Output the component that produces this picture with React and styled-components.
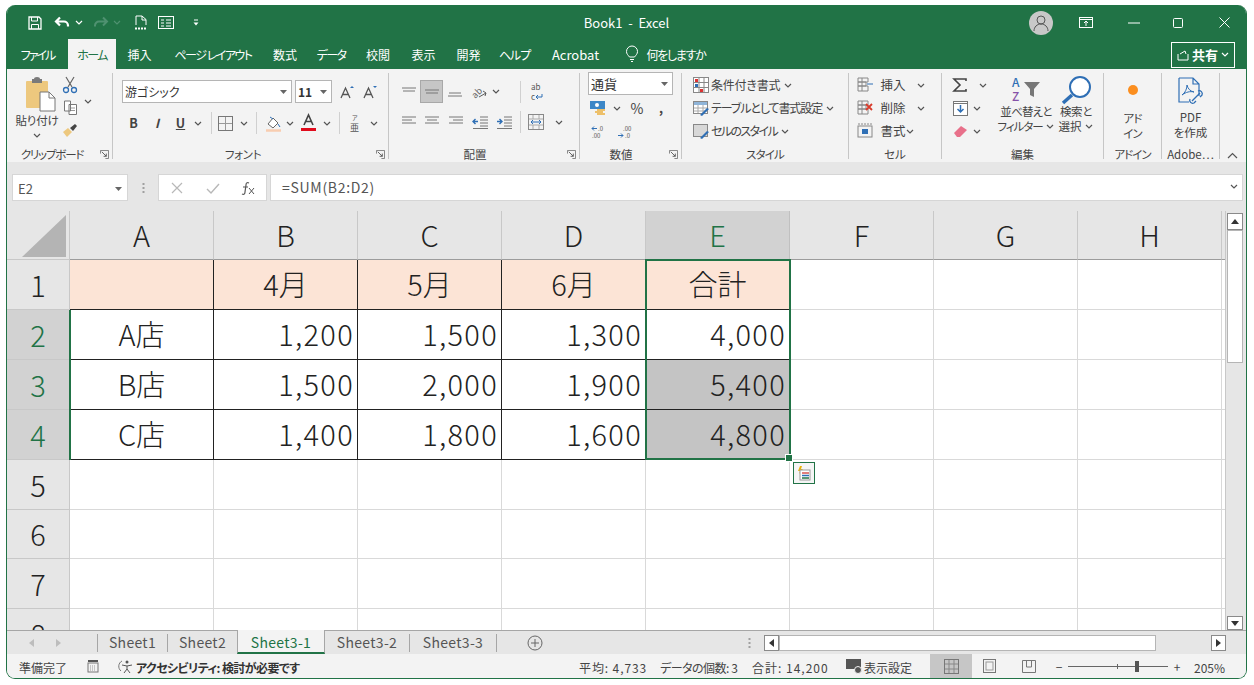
import React from 'react'
import styled, { createGlobalStyle } from 'styled-components'

const Global = createGlobalStyle`
  html, body { margin: 0; padding: 0; background: #fff; overflow: hidden; }
  body { font-family: "Noto Sans CJK JP", "Noto Sans", sans-serif; font-feature-settings: "palt"; }
  * { box-sizing: border-box; }
`

const GREEN = '#217346'

const Page = styled.div`
  width: 1254px;
  height: 685px;
  padding: 5px 7px 6px 6px;
`
const Win = styled.div`
  width: 100%;
  height: 100%;
  border: 1px solid ${GREEN};
  border-top: 0;
  border-radius: 9px;
  overflow: hidden;
  display: flex;
  flex-direction: column;
  background: #f3f3f3;
`

/* title bar */
const TitleBar = styled.div`
  height: 35px;
  padding-top: 1px;
  background: ${GREEN};
  position: relative;
  display: flex;
  align-items: center;
`
const Title = styled.div`
  position: absolute;
  left: 0;
  right: 0;
  top: 9px;
  text-align: center;
  color: #fff;
  font-size: 13px;
  line-height: 18px;
  white-space: pre;
`
const Slot = styled.span`
  flex: none;
  width: ${p => p.$w}px;
  margin-left: ${p => p.$ml || 0}px;
  display: inline-flex;
  align-items: center;
  justify-content: center;
`
const Avatar = styled.span`
  width: 24px;
  height: 24px;
  border-radius: 50%;
  background: #c8c8c8;
  display: flex;
  align-items: center;
  justify-content: center;
`

/* ribbon tabs */
const TabRow = styled.div`
  height: 30px;
  background: ${GREEN};
  display: flex;
  align-items: center;
`
const RTab = styled.div`
  flex: none;
  width: ${p => p.$w}px;
  margin-left: ${p => p.$ml || 0}px;
  height: 30px;
  text-align: center;
  font-size: ${p => p.$fs || 12}px;
  letter-spacing: ${p => p.$ls || 0}px;
  line-height: 31px;
  white-space: nowrap;
  color: ${p => (p.$on ? '#217346' : '#fff')};
  background: ${p => (p.$on ? '#f3f3f3' : 'transparent')};
`
const Share = styled.div`
  width: 64px;
  height: 26px;
  margin: 1px 11px 0 auto;
  border: 1px solid #fff;
  color: #fff;
  font-size: 13px;
  font-weight: 700;
  display: flex;
  align-items: center;
  justify-content: center;
  gap: 3px;
`

/* ribbon */
const Ribbon = styled.div`
  height: 93px;
  padding: 4px 0 3px;
  background: #f3f3f3;
  display: flex;
  position: relative;
`
const Group = styled.div`
  flex: none;
  width: ${p => p.$w}px;
  height: 86px;
  border-right: 1px solid #c6c6c6;
  display: flex;
  flex-direction: column;
  position: relative;
`
const Body = styled.div`
  flex: none;
  height: 75px;
  padding-top: 1px;
  padding-left: ${p => p.$pl || 0}px;
  display: flex;
  flex-direction: ${p => (p.$row ? 'row' : 'column')};
`
const GLabel = styled.div`
  height: 13px;
  width: ${p => (p.$w ? `${p.$w}px` : 'auto')};
  text-align: center;
  font-size: 11.5px;
  letter-spacing: ${p => p.$ls || 0}px;
  line-height: 13px;
  color: #444;
  white-space: nowrap;
`
const Launcher = styled.svg`
  position: absolute;
  right: 3px;
  bottom: 0;
  width: 9px;
  height: 9px;
`
const Row = styled.div`
  display: flex;
  align-items: center;
  height: ${p => p.$h}px;
  margin-top: ${p => p.$mt || 0}px;
  font-size: 12.5px;
  line-height: 16px;
  color: #444;
  white-space: nowrap;
`
const Txt = styled.span`
  font-size: ${p => p.$fs || 12}px;
  letter-spacing: ${p => p.$ls || 0}px;
`
const Column = styled.div`
  flex: none;
  width: ${p => p.$w}px;
  margin-left: ${p => p.$ml || 0}px;
  padding-top: ${p => p.$pt || 0}px;
  display: flex;
  flex-direction: column;
  align-items: center;
`
const Combo = styled.div`
  flex: none;
  width: ${p => p.$w}px;
  height: 23px;
  margin-left: ${p => p.$ml || 0}px;
  background: #fff;
  border: 1px solid #b5b5b5;
  display: flex;
  align-items: center;
  justify-content: space-between;
  padding: 0 4px 0 2px;
  font-size: 12px;
  color: #333;
`
const VSep = styled.span`
  flex: none;
  width: 1px;
  height: 22px;
  background: #d0d0d0;
  margin-left: ${p => p.$ml || 0}px;
  margin-right: ${p => p.$mr || 0}px;
`
const BigText = styled.div`
  font-size: 11.5px;
  letter-spacing: ${p => p.$ls || 0}px;
  line-height: 15px;
  color: #444;
  text-align: center;
  white-space: nowrap;
`
const Active = styled.span`
  flex: none;
  width: 23px;
  height: 23px;
  background: #c6c6c6;
  border: 1px solid #a8a8a8;
  display: inline-flex;
  align-items: center;
  justify-content: center;
`
const Collapse = styled.svg`
  position: absolute;
  right: 8px;
  bottom: 3px;
  width: 11px;
  height: 7px;
`

/* formula bar */
const FormulaBar = styled.div`
  height: 49px;
  background: #e6e6e6;
  padding: 12px 3px 10px 5px;
  display: flex;
`
const NameBox = styled.div`
  width: 116px;
  background: #fff;
  border: 1px solid #d6d6d6;
  display: flex;
  align-items: center;
  justify-content: space-between;
  padding: 2px 5px 0 5px;
  font-size: 13px;
  color: #555;
`
const Dots = styled.div`
  width: 30px;
  display: flex;
  align-items: center;
  justify-content: center;
`
const FxBox = styled.div`
  width: 109px;
  background: #fff;
  border: 1px solid #d6d6d6;
  display: flex;
  align-items: center;
`
const FInput = styled.div`
  flex: 1;
  margin-left: 3px;
  background: #fff;
  border: 1px solid #d6d6d6;
  display: flex;
  align-items: center;
  justify-content: space-between;
  padding: 0 4px 2px 11px;
  font-size: 14px;
  letter-spacing: 0.7px;
  color: #555;
`

/* sheet */
const SheetArea = styled.div`
  height: 419px;
  display: flex;
  background: #fff;
`
const Sheet = styled.div`
  width: 1220px;
  height: 419px;
  overflow: hidden;
  position: relative;
  display: grid;
  grid-template-columns: 63px repeat(8, 144px) 5px;
  grid-template-rows: 49px 50px 50px 50px 50px 50px 49px 50px 50px;
`
const Head = styled.div`
  background: ${p => (p.$sel ? '#d2d2d2' : '#e6e6e6')};
  color: ${p => (p.$sel ? GREEN : '#222')};
  border-right: 1px solid ${p => (p.$sel ? '#c0c0c0' : '#c8c8c8')};
  border-bottom: 1px solid ${p => (p.$dark ? '#9c9c9c' : '#c8c8c8')};
  font-size: 29px;
  font-weight: 300;
  display: flex;
  align-items: center;
  justify-content: center;
  padding-bottom: 2px;
  overflow: hidden;
`
const Corner = styled(Head)`
  align-items: flex-end;
  justify-content: flex-end;
  padding: 0 2px 2px 0;
`
const Cell = styled.div`
  background: ${p => p.$bg || '#fff'};
  border-right: 1px solid ${p => (p.$dr ? '#222' : '#d9d9d9')};
  border-bottom: 1px solid ${p => (p.$db ? '#222' : '#d9d9d9')};
  color: #222;
  font-size: 29px;
  font-weight: 300;
  letter-spacing: ${p => (p.$right ? 1.3 : 0)}px;
  display: flex;
  align-items: center;
  justify-content: ${p => (p.$right ? 'flex-end' : 'center')};
  padding: 0 ${p => (p.$right ? 3 : 0)}px 3px 0;
`
const Selection = styled.div`
  position: absolute;
  left: 638px;
  top: 48px;
  width: 146px;
  height: 201px;
  border: 2px solid ${GREEN};
  pointer-events: none;
`
const Handle = styled.span`
  position: absolute;
  right: -4px;
  bottom: -4px;
  width: 6px;
  height: 6px;
  background: ${GREEN};
  border: 1px solid #fff;
  box-sizing: content-box;
`
const Quick = styled.div`
  position: absolute;
  left: 786px;
  top: 251px;
  width: 22px;
  height: 22px;
  background: #f5f5f5;
  border: 1px solid ${GREEN};
  display: flex;
  align-items: center;
  justify-content: center;
`
const RowSelBar = styled.div`
  position: absolute;
  left: 62px;
  top: 99px;
  width: 2px;
  height: 150px;
  background: ${GREEN};
`
const VScroll = styled.div`
  flex: 1;
  background: #e6e6e6;
  border-left: 1px solid #c8c8c8;
  padding: 2px 3px 0 1px;
  display: flex;
  flex-direction: column;
`
const SBtn = styled.div`
  flex: none;
  height: ${p => p.$h || 16}px;
  width: ${p => p.$w || 16}px;
  margin-left: ${p => p.$ml || 0}px;
  background: #fff;
  border: 1px solid #8a8a8a;
  display: flex;
  align-items: center;
  justify-content: center;
`
const VThumb = styled.div`
  height: 133px;
  background: #fff;
  border: 1px solid #b5b5b5;
  margin-bottom: auto;
`

/* sheet tabs */
const TabBar = styled.div`
  height: 24px;
  background: #e6e6e6;
  border-top: 1px solid #a6a6a6;
  display: flex;
  align-items: center;
  position: relative;
`
const STab = styled.div`
  flex: none;
  width: ${p => p.$w}px;
  height: 24px;
  margin-top: -1px;
  text-align: center;
  font-size: 14px;
  letter-spacing: 0.3px;
  line-height: 25px;
  color: ${p => (p.$on ? GREEN : '#555')};
  background: ${p => (p.$on ? '#f3f3f3' : 'transparent')};
  border-left: ${p => (p.$on ? '1px solid #a6a6a6' : 0)};
  border-right: ${p => (p.$on ? '1px solid #a6a6a6' : 0)};
  border-bottom: ${p => (p.$on ? `2px solid ${GREEN}` : 0)};
`
const TabSep = styled.span`
  flex: none;
  width: 1px;
  height: 18px;
  background: #a6a6a6;
  margin-left: ${p => p.$ml || 0}px;
`
const HTrack = styled.div`
  flex: none;
  width: 377px;
  height: 16px;
  background: #fff;
  border: 1px solid #b5b5b5;
`
const HGap = styled.div`
  flex: none;
  width: 55px;
`

/* status bar */
const Status = styled.div`
  flex: 1;
  background: #f3f3f3;
  display: flex;
  align-items: center;
  font-size: 12px;
  color: #444;
  white-space: nowrap;
`
const SText = styled.span`
  flex: none;
  width: ${p => p.$w}px;
  margin-left: ${p => p.$ml || 0}px;
  padding-top: 2px;
  letter-spacing: ${p => p.$ls || 0}px;
  font-weight: ${p => (p.$b ? 700 : 400)};
  color: ${p => (p.$b ? '#333' : '#444')};
`
const ViewBtn = styled.span`
  flex: none;
  width: ${p => p.$w}px;
  margin-left: ${p => p.$ml || 0}px;
  height: 24px;
  background: ${p => (p.$on ? '#c6c6c6' : 'transparent')};
  display: flex;
  align-items: center;
  justify-content: center;
`
const Slider = styled.span`
  flex: none;
  width: 100px;
  height: 11px;
  margin-left: 5px;
  margin-right: 5px;
  position: relative;
  display: block;
`
const SliderLine = styled.span`
  position: absolute;
  left: 0;
  right: 0;
  top: 5px;
  height: 1px;
  background: #666;
`
const SliderMark = styled.span`
  position: absolute;
  left: ${p => p.$x}px;
  top: ${p => (p.$thumb ? 0 : 3)}px;
  width: ${p => (p.$thumb ? 4 : 1)}px;
  height: ${p => (p.$thumb ? 11 : 5)}px;
  background: ${p => (p.$thumb ? '#555' : '#666')};
`

/* icons */
const Chev = ({ c = '#555' }) => (
  <svg width="8" height="5" viewBox="0 0 8 5"><path d="M1 1l3 3 3-3" fill="none" stroke={c} strokeWidth="1.2" /></svg>
)
const Tri = () => <svg width="7" height="4" viewBox="0 0 7 4"><path d="M0 0h7L3.500 4z" fill="#666" /></svg>
const I = ({ w = 16, h = 16, children }) => <svg width={w} height={h} viewBox={`0 0 ${w} ${h}`} fill="none" overflow="visible">{children}</svg>
const Lines = ({ ys, xs }) => (
  <I w={16} h={14}>{ys.map((y, i) => <path key={i} d={`M${xs[i][0]} ${y}H${xs[i][1]}`} stroke="#777" />)}</I>
)

const LauncherIcon = () => (
  <Launcher viewBox="0 0 10 10" fill="none">
    <path d="M.5 4V.5H9.500V9.500H6" stroke="#777" />
    <path d="M2 2l5 5M7 4v3H4" stroke="#555" />
  </Launcher>
)

const qat = (
  <>
    <Slot $w={20} $ml={18}>
      <I w={14} h={14}><path d="M1 1h10l2 2v10H1z" stroke="#fff" strokeWidth="1.3" /><path d="M3.500 1v4h6V1M3.500 13V8.500h7V13" stroke="#fff" /></I>
    </Slot>
    <Slot $w={20} $ml={7}>
      <I w={16} h={14}><path d="M6 1.500L2 5.500l4 4M2.500 5.500H10a4 4 0 014 4v1" stroke="#fff" strokeWidth="2.200" /></I>
    </Slot>
    <Slot $w={10} $ml={2}><Chev c="#fff" /></Slot>
    <Slot $w={18} $ml={8}>
      <I w={16} h={14}><path d="M10 1.500l4 4-4 4M13.500 5.500H6a4 4 0 00-4 4v1" stroke="#4f9170" strokeWidth="2" /></I>
    </Slot>
    <Slot $w={10} $ml={2}><Chev c="#4f9170" /></Slot>
    <Slot $w={16} $ml={11}>
      <I w={14} h={15}><path d="M2 10V1h6l4 3.500V10M8 1v4h4" stroke="#fff" /><path d="M1 13.500h12" stroke="#fff" strokeWidth="2" strokeDasharray="2 1" /></I>
    </Slot>
    <Slot $w={18} $ml={8}>
      <I w={16} h={13}><rect x=".5" y=".5" width="15" height="12" stroke="#fff" /><path d="M3 4h3M8 4h5M3 7h3M8 7h5M3 10h3M8 10h5" stroke="#fff" /></I>
    </Slot>
    <Slot $w={8} $ml={17}>
      <I w={6} h={7}><path d="M1 1h4" stroke="#fff" /><path d="M.5 3.500h5L3 6.500z" fill="#fff" /></I>
    </Slot>
  </>
)

const Clipboard = () => (
  <Group $w={106}>
    <Body $row>
      <Column $w={44} $ml={8} $pt={3}>
        <Slot $w={34} $ml={9}>
          <I w={34} h={36}>
            <rect x="1" y="4" width="22" height="27" rx="1" fill="#edc87e" />
            <path d="M7 4V2h2a3 2 0 016 0h2v4H7z" fill="#7a7a7a" />
            <path d="M15 15h9l6 6v13H15z" fill="#fff" stroke="#777" />
            <path d="M24 15v6h6" stroke="#777" />
          </I>
        </Slot>
        <BigText $ls={-0.2}>貼り付け</BigText>
        <Row $h={14}><Chev /></Row>
      </Column>
      <Column $w={18} $ml={2} $pt={2}>
        <I w={16} h={18}>
          <path d="M4 1l6 10M12 1L6 11" stroke="#666" strokeWidth="1.200" />
          <circle cx="4" cy="14" r="2.500" stroke="#2f6fb5" strokeWidth="1.300" />
          <circle cx="12" cy="14" r="2.500" stroke="#2f6fb5" strokeWidth="1.300" />
        </I>
        <Row $h={24} $mt={1}>
          <I w={15} h={15}><path d="M1.500 1h6v10h-6zM6 4.500h7.500v10H6z" fill="#fff" stroke="#777" /><path d="M8 8h4M8 10.500h4" stroke="#999" /></I>
        </Row>
        <Row $h={24} $mt={-1}>
          <I w={16} h={15}><path d="M1 9l5-4 4 4-5 5z" fill="#edc87e" /><path d="M8 5l5-4 2 2-4 5z" fill="#444" /></I>
        </Row>
      </Column>
      <Column $w={16} $ml={1} $pt={25}><Chev /></Column>
    </Body>
    <GLabel $w={90} $ls={-1.2}>クリップボード</GLabel>
    <LauncherIcon />
  </Group>
)

const FontGroup = () => (
  <Group $w={276}>
    <Body $pl={9}>
      <Row $h={23} $mt={6}>
        <Combo $w={170}>游ゴシック<Tri /></Combo>
        <Combo $w={37} $ml={3}><b>11</b><Tri /></Combo>
        <Slot $w={23} $ml={4}><I w={16} h={14}><path d="M1 13L5.500 3 10 13M3 9.500h5" stroke="#555" strokeWidth="1.300" /><path d="M10 3l2-2 2 2z" fill="#2f6fb5" /></I></Slot>
        <Slot $w={23}><I w={16} h={14}><path d="M1 13L5.500 3 10 13M3 9.500h5" stroke="#555" strokeWidth="1.300" /><path d="M10 1l2 2 2-2z" fill="#2f6fb5" /></I></Slot>
      </Row>
      <Row $h={22} $mt={9}>
        <Slot $w={23}><b>B</b></Slot>
        <Slot $w={24}><b><i>I</i></b></Slot>
        <Slot $w={23}><b><u>U</u></b></Slot>
        <Slot $w={12}><Chev /></Slot>
        <VSep $ml={7} $mr={5} />
        <Slot $w={16}><I w={15} h={15}><rect x=".5" y=".5" width="14" height="14" stroke="#777" /><path d="M7.500 1v13M1 7.500h13" stroke="#999" /></I></Slot>
        <Slot $w={5} />
        <Slot $w={12}><Chev /></Slot>
        <VSep $ml={6} $mr={7} />
        <Slot $w={18}><I w={17} h={17}><path d="M3 9l5-6 5 5-5 5z" fill="#fff" stroke="#666" /><path d="M5 2l3 2M13 9l2 3" stroke="#2f6fb5" /><path d="M1 15.500h15" stroke="#f8cdb0" strokeWidth="2.500" /></I></Slot>
        <Slot $w={12} $ml={2}><Chev /></Slot>
        <Slot $w={20} $ml={2}><I w={17} h={18}><path d="M4 11L8.500 1 13 11M5.500 7.500h6" stroke="#444" strokeWidth="1.600" /><path d="M1 15.500h15" stroke="#e00b1c" strokeWidth="3" /></I></Slot>
        <Slot $w={12} $ml={3}><Chev /></Slot>
        <VSep $ml={6} $mr={7} />
        <Slot $w={15}><I w={12} h={18}><text x="3" y="6" fontSize="6" fill="#555">ア</text><text x="1" y="17" fontSize="9" fill="#555">亜</text></I></Slot>
        <Slot $w={12} $ml={6}><Chev /></Slot>
      </Row>
    </Body>
    <GLabel $w={260} $ls={-0.3}>フォント</GLabel>
    <LauncherIcon />
  </Group>
)

const AlignGroup = () => (
  <Group $w={191}>
    <Body $pl={8}>
      <Row $h={23} $mt={6}>
        <Slot $w={23}><Lines ys={[3, 6]} xs={[[1, 15], [2, 14]]} /></Slot>
        <Active><Lines ys={[5, 8]} xs={[[1, 15], [2, 14]]} /></Active>
        <Slot $w={24}><Lines ys={[8, 11]} xs={[[2, 14], [1, 15]]} /></Slot>
        <Slot $w={24}><I w={18} h={14}><text x="2" y="12" fontSize="9" fill="#666" transform="rotate(-45 6 9)">ab</text><path d="M9 12l7-4M13 6l3 2-1 3" stroke="#5a5a5a" /></I></Slot>
        <Slot $w={12} $ml={-1}><Chev /></Slot>
        <VSep $ml={18} $mr={3} />
        <Slot $w={24}><I w={16} h={18}><text x="3" y="7" fontSize="8" fill="#555">ab</text><text x="3" y="17" fontSize="8" fill="#555">c</text><path d="M14 11v3H8M10 12l-2 2 2 2" stroke="#2f6fb5" /></I></Slot>
      </Row>
      <Row $h={22} $mt={8}>
        <Slot $w={23}><Lines ys={[2, 5, 8]} xs={[[1, 15], [1, 11], [1, 15]]} /></Slot>
        <Slot $w={24}><Lines ys={[2, 5, 8]} xs={[[1, 15], [3, 13], [1, 15]]} /></Slot>
        <Slot $w={24}><Lines ys={[2, 5, 8]} xs={[[1, 15], [5, 15], [1, 15]]} /></Slot>
        <Slot $w={24}><I w={17} h={14}><path d="M8 2h8M8 5h8M8 8h8M8 11h8M1 13.500h15" stroke="#777" /><path d="M1 6.500h5M3.500 4L1 6.500 3.500 9" stroke="#2f6fb5" strokeWidth="1.400" /></I></Slot>
        <Slot $w={24}><I w={17} h={14}><path d="M8 2h8M8 5h8M8 8h8M8 11h8M1 13.500h15" stroke="#777" /><path d="M1 6.500h5M3.500 4L6 6.500 3.500 9" stroke="#2f6fb5" strokeWidth="1.400" /></I></Slot>
        <VSep $ml={4} $mr={3} />
        <Slot $w={24}><I w={16} h={16}><rect x=".5" y=".5" width="15" height="15" stroke="#888" /><path d="M1 5h14M1 11h14M5 1v4M11 1v4M5 11v4M11 11v4" stroke="#aaa" /><path d="M3 8h10M5 6L3 8l2 2M11 6l2 2-2 2" stroke="#2f6fb5" /></I></Slot>
        <Slot $w={12} $ml={5}><Chev /></Slot>
      </Row>
    </Body>
    <GLabel $w={172}>配置</GLabel>
    <LauncherIcon />
  </Group>
)

const NumberGroup = () => (
  <Group $w={102}>
    <Body $pl={8}>
      <Row $h={23} $mt={-2}><Combo $w={85}><Txt $fs={13}>通貨</Txt><Tri /></Combo></Row>
      <Row $h={22} $mt={2}>
        <Slot $w={20}><I w={18} h={16}><rect x="1" y="1" width="15" height="8" fill="#3d87c7" /><circle cx="8" cy="5" r="2" fill="#fff" /><rect x="8" y="9" width="8" height="2" fill="#edc06a" /><rect x="6" y="11" width="8" height="2" fill="#edc06a" /><rect x="8" y="13" width="8" height="2" fill="#edc06a" /></I></Slot>
        <Slot $w={12} $ml={3}><Chev /></Slot>
        <Slot $w={22} $ml={3}><Txt $fs={14}>%</Txt></Slot>
        <Slot $w={20} $ml={3}><b>,</b></Slot>
      </Row>
      <Row $h={22} $mt={1}>
        <Slot $w={21}><I w={16} h={15}><path d="M1 4.500h5M3 2.500l-2 2 2 2" stroke="#2f6fb5" /><text x="7" y="7" fontSize="6" fill="#555">.0</text><text x="1" y="14" fontSize="6" fill="#555">.00</text></I></Slot>
        <Slot $w={21} $ml={5}><I w={16} h={15}><text x="6" y="7" fontSize="6" fill="#555">.00</text><path d="M1 11.500h5M4 9.500l2 2-2 2" stroke="#2f6fb5" /><text x="8" y="14" fontSize="6" fill="#555">.0</text></I></Slot>
      </Row>
    </Body>
    <GLabel $w={82}>数値</GLabel>
    <LauncherIcon />
  </Group>
)

const StyleRow = ({ mt, icon, ls, children }) => (
  <Row $h={22} $mt={mt}>
    <Slot $w={20}>{icon}</Slot>
    <Txt $ls={ls}>{children}</Txt>
    <Slot $w={12} $ml={2}><Chev /></Slot>
  </Row>
)

const StyleGroup = () => (
  <Group $w={167}>
    <Body $pl={9}>
      <StyleRow mt={0} ls={-0.2} icon={<I w={17} h={17}><rect x=".5" y=".5" width="15" height="15" fill="#fff" stroke="#888" /><path d="M1 5.500h5M1 10.500h5M6 1v14M11 1v14M6 5.500h9M6 10.500h9" stroke="#888" /><rect x="2" y="2" width="3" height="3" fill="#d33" /><rect x="2" y="7" width="3" height="3" fill="#2f6fb5" /><rect x="7" y="12" width="3" height="3" fill="#d33" /></I>}>条件付き書式</StyleRow>
      <StyleRow mt={1} ls={-1.1} icon={<I w={17} h={17}><rect x=".5" y="1.500" width="14" height="12" fill="#fff" stroke="#888" /><path d="M1 2h13v3H1z" fill="#8fb4d8" /><path d="M1 8h13M1 11h13M5 5v8M10 5v8" stroke="#aaa" /><path d="M7 15l7-7 2 1-7 7z" fill="#2f6fb5" /></I>}>テーブルとして書式設定</StyleRow>
      <StyleRow mt={1} ls={-1.6} icon={<I w={17} h={17}><rect x=".5" y="1.500" width="14" height="12" fill="#d8d8d8" stroke="#888" /><path d="M7 15l7-7 2 1-7 7z" fill="#2f6fb5" /></I>}>セルのスタイル</StyleRow>
    </Body>
    <GLabel $ls={-0.8}>スタイル</GLabel>
  </Group>
)

const CellsGroup = () => (
  <Group $w={93}>
    <Body $pl={7}>
      <Row $h={22}>
        <Slot $w={18}><I w={16} h={16}><path d="M1 1h10v4H1zM1 5h8v4H1zM1 9h10v5H1zM5 1v13" stroke="#888" /><path d="M10 7h6" stroke="#2f6fb5" /></I></Slot>
        <Slot $w={30} $ml={4}>挿入</Slot>
        <Slot $w={12} $ml={7}><Chev /></Slot>
      </Row>
      <Row $h={22} $mt={1}>
        <Slot $w={18}><I w={16} h={16}><path d="M1 1h10v4H1zM1 5h8v4H1zM1 9h10v5H1zM5 1v13" stroke="#888" /><path d="M9 4l6 6M15 4l-6 6" stroke="#d83b2b" strokeWidth="1.800" /></I></Slot>
        <Slot $w={30} $ml={4}>削除</Slot>
        <Slot $w={12} $ml={7}><Chev /></Slot>
      </Row>
      <Row $h={22} $mt={1}>
        <Slot $w={18}><I w={16} h={16}><rect x="1" y="3" width="14" height="11" stroke="#888" /><path d="M1 1h14" stroke="#888" strokeDasharray="2 1" /><rect x="5" y="6" width="6" height="5" fill="#2f6fb5" /></I></Slot>
        <Slot $w={30} $ml={4}>書式</Slot>
        <Slot $w={12} $ml={-4}><Chev /></Slot>
      </Row>
    </Body>
    <GLabel>セル</GLabel>
  </Group>
)

const EditGroup = () => (
  <Group $w={162}>
    <Body $row>
      <Column $w={38} $ml={9}>
        <Row $h={22}>
          <Slot $w={18}><I w={14} h={14}><path d="M13 3V1H1l6 6-6 6h12v-2" stroke="#444" strokeWidth="1.600" /></I></Slot>
          <Slot $w={12} $ml={8}><Chev /></Slot>
        </Row>
        <Row $h={22} $mt={1}>
          <Slot $w={18}><I w={15} h={15}><rect x=".5" y=".5" width="14" height="14" fill="#fff" stroke="#777" /><path d="M1 2.500h13" stroke="#777" /><path d="M7.500 4v7M4.500 8l3 3 3-3" stroke="#2f6fb5" strokeWidth="1.500" /></I></Slot>
          <Slot $w={12} $ml={2}><Chev /></Slot>
          <Slot $w={6} />
        </Row>
        <Row $h={22} $mt={1}>
          <Slot $w={18}><I w={15} h={13}><path d="M1 8l7-7 6 4-7 7H4z" fill="#e8708a" /></I></Slot>
          <Slot $w={12} $ml={2}><Chev /></Slot>
          <Slot $w={6} />
        </Row>
      </Column>
      <Column $w={60} $ml={7} $pt={2}>
        <Row $h={28}>
          <I w={32} h={28}>
            <text x="2" y="11" fontSize="12" fontWeight="500" fill="#2f6fb5">A</text>
            <text x="2" y="25" fontSize="12" fontWeight="500" fill="#8652a8">Z</text>
            <path d="M14 6h16l-6 7v8l-4-2v-6z" fill="#777" />
          </I>
        </Row>
        <BigText $ls={-0.8}>並べ替えと</BigText>
        <Row $h={15}><BigText $ls={-1}>フィルター</BigText><Slot $w={10} $ml={2}><Chev /></Slot></Row>
      </Column>
      <Column $w={38} $ml={1} $pt={1}>
        <Row $h={29}>
          <I w={32} h={29}>
            <circle cx="20" cy="12" r="10" fill="#fff" stroke="#2f6fb5" strokeWidth="2" />
            <path d="M12 20L3 28" stroke="#2f6fb5" strokeWidth="3.500" />
          </I>
        </Row>
        <BigText $ls={-0.3}>検索と</BigText>
        <Row $h={15}><BigText>選択</BigText><Slot $w={10} $ml={2}><Chev /></Slot></Row>
      </Column>
    </Body>
    <GLabel>編集</GLabel>
  </Group>
)

const AddinGroup = () => (
  <Group $w={58}>
    <Body>
      <Column $w={57} $pt={6}>
        <Row $h={20}><I w={14} h={14}><circle cx="7" cy="7" r="5" fill="#fb8e1f" /></I></Row>
        <Row $h={11} />
        <BigText $ls={-0.8}>アド</BigText>
        <BigText $ls={-0.8}>イン</BigText>
      </Column>
    </Body>
    <GLabel $ls={-1}>アドイン</GLabel>
  </Group>
)

const AdobeGroup = () => (
  <Group $w={58}>
    <Body>
      <Column $w={57} $pt={2}>
        <Row $h={31}>
          <I w={30} h={30}>
            <path d="M3 1h14l6 6v12M17 1v6h6M3 1v24h10" stroke="#2f6fb5" strokeWidth="1.200" />
            <path d="M6 18c3-2 5-6 5-10 1 4 3 6 7 7-4-1-8 0-12 3z" stroke="#2f6fb5" />
            <path d="M16 24l8-8M14 22a3 3 0 004 4l2-2M22 14a3 3 0 014 4l-2 2" stroke="#2f6fb5" strokeWidth="1.300" />
          </I>
        </Row>
        <Row $h={3} />
        <BigText>PDF</BigText>
        <BigText>を作成</BigText>
      </Column>
    </Body>
    <GLabel>Adobe⋯</GLabel>
  </Group>
)

const cols = ['A', 'B', 'C', 'D', 'E', 'F', 'G', 'H']
const data = [
  [null, '4月', '5月', '6月', '合計'],
  ['A店', '1,200', '1,500', '1,300', '4,000'],
  ['B店', '1,500', '2,000', '1,900', '5,400'],
  ['C店', '1,400', '1,800', '1,600', '4,800'],
]
const rows = [1, 2, 3, 4, 5, 6, 7, 8]

const renderRow = r => {
  const cells = []
  const line = data[r - 1]
  for (let c = 0; c < 8; c++) {
    const v = line && c < 5 ? line[c] : null
    const inTable = !!line && c < 5
    const nextIn = !!line && c < 4
    const isNum = r > 1 && c > 0 && inTable
    let bg = '#fff'
    if (r === 1 && inTable) bg = '#fce4d6'
    if ((r === 3 || r === 4) && c === 4) bg = '#c4c4c4'
    cells.push(
      <Cell key={c} $bg={bg} $dr={nextIn} $db={inTable} $right={isNum}>{v}</Cell>
    )
  }
  cells.push(<Cell key="x" />)
  return cells
}

export default function App() {
  return (
    <Page>
      <Global />
      <Win>
        <TitleBar>
          {qat}
          <Title>{'Book1  -  Excel'}</Title>
          <Slot $w={24} $ml={829}>
            <Avatar>
              <I w={16} h={18}><circle cx="8" cy="6" r="4" stroke="#555" /><path d="M1 17c0-4 3-7 7-7s7 3 7 7" stroke="#555" /></I>
            </Avatar>
          </Slot>
          <Slot $w={16} $ml={25}>
            <I w={14} h={11}><rect x=".5" y=".5" width="13" height="10" stroke="#fff" /><path d="M1 2.500h12" stroke="#fff" /><path d="M7 9V4.500M5 6l2-2 2 2" stroke="#fff" /></I>
          </Slot>
          <Slot $w={14} $ml={33}><I w={12} h={2}><path d="M0 1h12" stroke="#fff" /></I></Slot>
          <Slot $w={12} $ml={31}><I w={10} h={10}><rect x=".5" y=".5" width="9" height="9" rx="1" stroke="#fff" /></I></Slot>
          <Slot $w={12} $ml={34}><I w={11} h={11}><path d="M.5.500l10 10M10.500.500l-10 10" stroke="#fff" /></I></Slot>
        </TitleBar>
        <TabRow>
          <RTab $w={53} $ml={4} $ls={-2}>ファイル</RTab>
          <RTab $w={48} $ml={4} $ls={-1.6} $on>ホーム</RTab>
          <RTab $w={47}>挿入</RTab>
          <RTab $w={100} $ls={-1.5}>ページ レイアウト</RTab>
          <RTab $w={44}>数式</RTab>
          <RTab $w={48} $ls={-1.6}>データ</RTab>
          <RTab $w={46}>校閲</RTab>
          <RTab $w={45}>表示</RTab>
          <RTab $w={45}>開発</RTab>
          <RTab $w={47} $ls={-1}>ヘルプ</RTab>
          <RTab $w={67} $ml={4} $fs={13}>Acrobat</RTab>
          <Slot $w={20} $ml={13}>
            <I w={14} h={18}><path d="M4.500 12C3 10 1.500 9 1.500 6.500a5.500 5.500 0 0111 0C12.500 9 11 10 9.500 12zM5 14.500h4M6 16.500h2" stroke="#fff" /></I>
          </Slot>
          <RTab $w={60} $ml={4} $ls={-1.3}>何をしますか</RTab>
          <Share>
            <I w={12} h={12}><path d="M1 5v6h10V5M3 5l5-3 1 3" stroke="#fff" /></I>
            共有
            <Chev c="#fff" />
          </Share>
        </TabRow>
        <Ribbon>
          <Clipboard />
          <FontGroup />
          <AlignGroup />
          <NumberGroup />
          <StyleGroup />
          <CellsGroup />
          <EditGroup />
          <AddinGroup />
          <AdobeGroup />
          <Collapse viewBox="0 0 11 7" fill="none"><path d="M1 6l4.500-4.500L10 6" stroke="#555" strokeWidth="1.200" /></Collapse>
        </Ribbon>
        <FormulaBar>
          <NameBox>E2<Tri /></NameBox>
          <Dots><I w={3} h={12}><path d="M1.500 1v2M1.500 5v2M1.500 9v2" stroke="#a0a0a0" strokeWidth="2" /></I></Dots>
          <FxBox>
            <Slot $w={14} $ml={11}><I w={14} h={14}><path d="M2 2l10 10M12 2L2 12" stroke="#b8b8b8" strokeWidth="1.200" /></I></Slot>
            <Slot $w={16} $ml={21}><I w={16} h={14}><path d="M2 8l4 4 8-9" stroke="#b8b8b8" strokeWidth="1.400" /></I></Slot>
            <Slot $w={16} $ml={19}><I w={16} h={16}><path d="M9 3c-2-1-3 0-3 2l-1 7c0 2-1 3-3 2M3 7h5" stroke="#555" strokeWidth="1.200" /><path d="M9 8l5 6M14 8l-5 6" stroke="#555" /></I></Slot>
          </FxBox>
          <FInput>=SUM(B2:D2)<Chev /></FInput>
        </FormulaBar>
        <SheetArea>
          <Sheet>
            <Corner>
              <I w={46} h={43}><path d="M45 1v42H1z" fill="#b4b4b4" /></I>
            </Corner>
            {cols.map(c => <Head key={c} $sel={c === 'E'} $dark>{c}</Head>)}
            <Head $dark />
            {rows.map(r => (
              <React.Fragment key={r}>
                <Head $sel={r >= 2 && r <= 4}>{r}</Head>
                {renderRow(r)}
              </React.Fragment>
            ))}
            <RowSelBar />
            <Selection><Handle /></Selection>
            <Quick>
              <I w={16} h={16}><path d="M4 1L2 6h2L3 9l4-5H5l1-3z" fill="#eab308" /><rect x="4" y="5" width="10" height="10" fill="#fff" stroke="#999" /><path d="M6 8h7" stroke="#d9534f" strokeWidth="1.500" /><path d="M6 10.500h7" stroke="#2f6fb5" strokeWidth="1.500" /><path d="M6 13h7" stroke="#217346" strokeWidth="1.500" /></I>
            </Quick>
          </Sheet>
          <VScroll>
            <SBtn $h={17}><svg width="8" height="5" viewBox="0 0 8 5"><path d="M0 5h8L4 0z" fill="#333" /></svg></SBtn>
            <VThumb />
            <SBtn $h={14}><svg width="8" height="5" viewBox="0 0 8 5"><path d="M0 0h8L4 5z" fill="#333" /></svg></SBtn>
          </VScroll>
        </SheetArea>
        <TabBar>
          <Slot $w={8} $ml={20}><svg width="5" height="8" viewBox="0 0 5 8"><path d="M5 0v8L0 4z" fill="#bdbdbd" /></svg></Slot>
          <Slot $w={8} $ml={19}><svg width="5" height="8" viewBox="0 0 5 8"><path d="M0 0v8l5-4z" fill="#bdbdbd" /></svg></Slot>
          <TabSep $ml={35} />
          <STab $w={69}>Sheet1</STab>
          <TabSep />
          <STab $w={69}>Sheet2</STab>
          <STab $w={88} $on>Sheet3-1</STab>
          <STab $w={84}>Sheet3-2</STab>
          <TabSep />
          <STab $w={86}>Sheet3-3</STab>
          <TabSep />
          <Slot $w={16} $ml={30}>
            <I w={16} h={16}><circle cx="8" cy="8" r="7" stroke="#666" /><path d="M8 4v8M4 8h8" stroke="#666" /></I>
          </Slot>
          <Slot $w={4} $ml={204}><I w={3} h={12}><path d="M1.500 1v2M1.500 5v2M1.500 9v2" stroke="#a0a0a0" strokeWidth="2" /></I></Slot>
          <SBtn $w={15} $h={16} $ml={13}><svg width="5" height="8" viewBox="0 0 5 8"><path d="M5 0v8L0 4z" fill="#333" /></svg></SBtn>
          <HTrack />
          <HGap />
          <SBtn $w={15} $h={16}><svg width="5" height="8" viewBox="0 0 5 8"><path d="M0 0v8l5-4z" fill="#333" /></svg></SBtn>
        </TabBar>
        <Status>
          <SText $w={48} $ml={12}>準備完了</SText>
          <Slot $w={14} $ml={19}><I w={12} h={13}><rect x="1" y="3" width="10" height="9" stroke="#777" /><path d="M1 1h10" stroke="#555" strokeWidth="2" /><path d="M3 6h6M3 8h6M3 10h6" stroke="#999" strokeDasharray="1 1" /></I></Slot>
          <Slot $w={16} $ml={17}><I w={16} h={15}><path d="M5 2a6 6 0 00-1 10" stroke="#777" /><circle cx="10" cy="3" r="1.500" fill="#555" /><path d="M5 6l5 1 5-1M10 7v3l-3 4M10 10l3 4" stroke="#555" /></I></Slot>
          <SText $w={165} $ml={3} $b $ls={-0.6}>アクセシビリティ: 検討が必要です</SText>
          <SText $w={68} $ml={278} $ls={0.9}>平均: 4,733</SText>
          <SText $w={78} $ml={13} $ls={-0.5}>データの個数: 3</SText>
          <SText $w={76} $ml={14} $ls={1}>合計: 14,200</SText>
          <Slot $w={18} $ml={17}><I w={17} h={15}><rect x="0" y="0" width="15" height="10" fill="#555" /><circle cx="12" cy="11" r="3.500" fill="#555" stroke="#f3f3f3" /></I></Slot>
          <SText $w={50} $ml={1}>表示設定</SText>
          <ViewBtn $w={42} $ml={16} $on><I w={15} h={15}><rect x=".5" y=".5" width="14" height="14" stroke="#777" /><path d="M5 1v13M10 1v13M1 5h13M1 10h13" stroke="#888" /></I></ViewBtn>
          <ViewBtn $w={16} $ml={9}><I w={13} h={14}><rect x=".5" y=".5" width="12" height="13" stroke="#777" /><rect x="3" y="3" width="7" height="8" stroke="#999" /></I></ViewBtn>
          <ViewBtn $w={16} $ml={24}><I w={14} h={13}><path d="M.5.500h13v12H.5zM4.500 1v6h5V1" stroke="#777" /></I></ViewBtn>
          <Slot $w={8} $ml={18}>−</Slot>
          <Slider>
            <SliderLine />
            <SliderMark $x={49} />
            <SliderMark $x={67} $thumb />
          </Slider>
          <Slot $w={8}>+</Slot>
          <SText $w={36} $ml={13}>205%</SText>
        </Status>
      </Win>
    </Page>
  )
}
